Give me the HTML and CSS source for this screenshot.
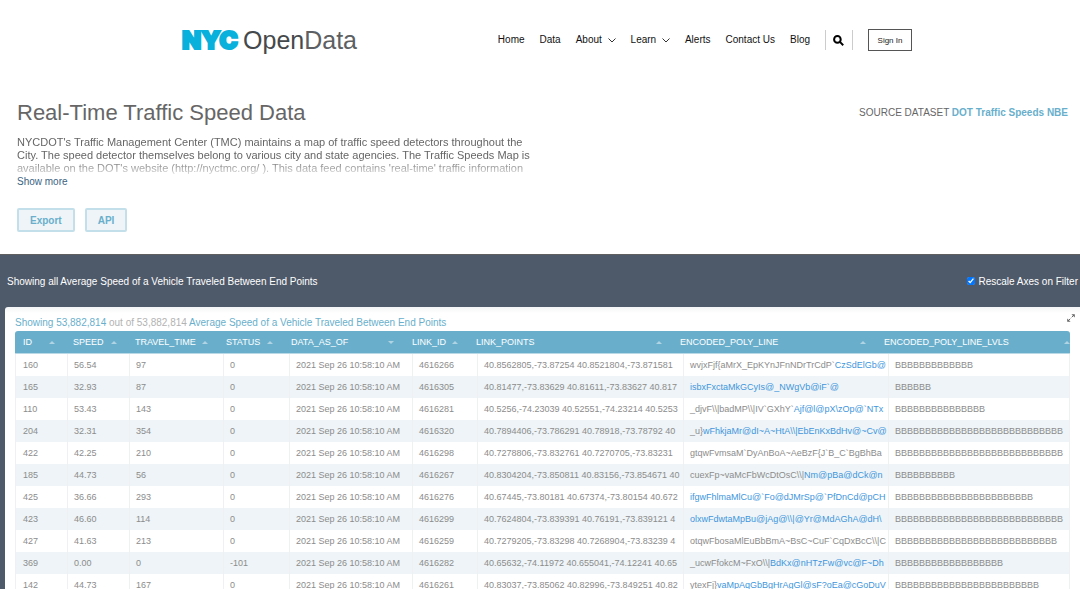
FILE: index.html
```html
<!DOCTYPE html>
<html lang="en">
<head>
<meta charset="utf-8">
<title>Real-Time Traffic Speed Data | NYC Open Data</title>
<link rel="stylesheet" href="styles.css">
</head>
<body>
<header class="site-header">
  <a class="logo" href="#"><span class="logo-nyc">NYC</span><span class="logo-open">Open</span><span class="logo-data">Data</span></a>
  <nav class="nav">
    <a href="#">Home</a>
    <a href="#">Data</a>
    <a href="#">About <svg class="chevron" viewBox="0 0 8 5"><path d="M.5.5 4 4 7.500.5"/></svg></a>
    <a href="#">Learn <svg class="chevron" viewBox="0 0 8 5"><path d="M.5.5 4 4 7.500.5"/></svg></a>
    <a href="#">Alerts</a>
    <a href="#">Contact Us</a>
    <a href="#">Blog</a>
  </nav>
  <button class="search" type="button" aria-label="Search"><svg viewBox="0 0 11 11"><circle cx="4.400" cy="4.400" r="3.300"/><path d="M6.900 6.900 10.200 10.200"/></svg></button>
  <button class="sign-in" type="button">Sign In</button>
</header>

<section class="intro">
  <div class="intro-main">
    <h1>Real-Time Traffic Speed Data</h1>
    <p class="description">NYCDOT's Traffic Management Center (TMC) maintains a map of traffic speed detectors throughout the City. The speed detector themselves belong to various city and state agencies. The Traffic Speeds Map is available on the DOT's website (http://nyctmc.org/ ). This data feed contains 'real-time' traffic information</p>
    <a class="show-more" href="#">Show more</a>
    <div class="actions"><button type="button">Export</button><button type="button">API</button></div>
  </div>
  <p class="source">SOURCE DATASET <a href="#">DOT Traffic Speeds NBE</a></p>
</section>

<main class="board">
  <div class="filter-bar">
    <span>Showing all Average Speed of a Vehicle Traveled Between End Points</span>
    <label class="rescale"><input type="checkbox" checked> Rescale Axes on Filter</label>
  </div>
  <section class="card">
    <div class="card-head">
      <p class="summary">Showing 53,882,814 <span>out of 53,882,814</span> Average Speed of a Vehicle Traveled Between End Points</p>
      <button class="expand" type="button" aria-label="Expand"><svg viewBox="0 0 8 8"><path class="tip" d="M4.400.2H7.800V3.600ZM.2 4.400V7.800H3.600Z"/><path class="stem" d="M6.500 1.500 4.700 3.300M3.300 4.700 1.500 6.500"/></svg></button>
    </div>
    <div class="table-wrap">
      <table class="head-table">
        <colgroup><col class="h1"><col class="h2"><col class="h3"><col class="h4"><col class="h5"><col class="h6"><col class="h7"><col class="h8"><col></colgroup>
        <thead><tr>
          <th><button type="button">ID</button></th>
          <th><button type="button">SPEED</button></th>
          <th><button type="button">TRAVEL_TIME</button></th>
          <th><button type="button">STATUS</button></th>
          <th class="desc"><button type="button">DATA_AS_OF</button></th>
          <th><button type="button">LINK_ID</button></th>
          <th><button type="button">LINK_POINTS</button></th>
          <th><button type="button">ENCODED_POLY_LINE</button></th>
          <th><button type="button">ENCODED_POLY_LINE_LVLS</button></th>
        </tr></thead>
      </table>
      <table class="body-table">
        <colgroup><col class="b1"><col class="b2"><col class="b3"><col class="b4"><col class="b5"><col class="b6"><col class="b7"><col class="b8"><col></colgroup>
        <tbody>
          <tr><td>160</td><td>56.54</td><td>97</td><td>0</td><td>2021 Sep 26 10:58:10 AM</td><td>4616266</td><td>40.8562805,-73.87254 40.8521804,-73.871581</td><td>wvjxFjf{aMrX_EpKYnJFnNDrTrCdP`<a href="#">CzSdElGb@</a></td><td>BBBBBBBBBBBBB</td></tr>
          <tr><td>165</td><td>32.93</td><td>87</td><td>0</td><td>2021 Sep 26 10:58:10 AM</td><td>4616305</td><td>40.81477,-73.83629 40.81611,-73.83627 40.817</td><td><a href="#">isbxFxctaMkGCyIs@_NWgVb@iF`@</a></td><td>BBBBBB</td></tr>
          <tr><td>110</td><td>53.43</td><td>143</td><td>0</td><td>2021 Sep 26 10:58:10 AM</td><td>4616281</td><td>40.5256,-74.23039 40.52551,-74.23214 40.5253</td><td>_djvF\\|badMP\\|IV`GXhY`<a href="#">Ajf@l@pX\zOp@`NTx</a></td><td>BBBBBBBBBBBBBBB</td></tr>
          <tr><td>204</td><td>32.31</td><td>354</td><td>0</td><td>2021 Sep 26 10:58:10 AM</td><td>4616320</td><td>40.7894406,-73.786291 40.78918,-73.78792 40</td><td>_u}<a href="#">wFhkjaMr@dI~A~HtA\\|EbEnKxBdHv@~Cv@</a></td><td>BBBBBBBBBBBBBBBBBBBBBBBBBBBB</td></tr>
          <tr><td>422</td><td>42.25</td><td>210</td><td>0</td><td>2021 Sep 26 10:58:10 AM</td><td>4616298</td><td>40.7278806,-73.832761 40.7270705,-73.83231</td><td>gtqwFvmsaM`DyAnBoA~AeBzF{J`B_C`BgBhBa</td><td>BBBBBBBBBBBBBBBBBBBBBBBBBBBB</td></tr>
          <tr><td>185</td><td>44.73</td><td>56</td><td>0</td><td>2021 Sep 26 10:58:10 AM</td><td>4616267</td><td>40.8304204,-73.850811 40.83156,-73.854671 40</td><td>cuexFp~vaMcFbWcDtOsC\\|<a href="#">Nm@pBa@dCk@n</a></td><td>BBBBBBBBBB</td></tr>
          <tr><td>425</td><td>36.66</td><td>293</td><td>0</td><td>2021 Sep 26 10:58:10 AM</td><td>4616276</td><td>40.67445,-73.80181 40.67374,-73.80154 40.672</td><td><a href="#">ifgwFhlmaMlCu@`Fo@dJMrSp@`PfDnCd@pCH</a></td><td>BBBBBBBBBBBBBBBBBBBBBBB</td></tr>
          <tr><td>423</td><td>46.60</td><td>114</td><td>0</td><td>2021 Sep 26 10:58:10 AM</td><td>4616299</td><td>40.7624804,-73.839391 40.76191,-73.839121 4</td><td><a href="#">olxwFdwtaMpBu@jAg@\\|@Yr@MdAGhA@dH\</a></td><td>BBBBBBBBBBBBBBBBBBBBBBBBBBBB</td></tr>
          <tr><td>427</td><td>41.63</td><td>213</td><td>0</td><td>2021 Sep 26 10:58:10 AM</td><td>4616259</td><td>40.7279205,-73.83298 40.7268904,-73.83239 4</td><td>otqwFbosaMlEuBbBmA~BsC~CuF`CqDxBcC\\|C</td><td>BBBBBBBBBBBBBBBBBBBBBBBBBBB</td></tr>
          <tr><td>369</td><td>0.00</td><td>0</td><td>-101</td><td>2021 Sep 26 10:58:10 AM</td><td>4616282</td><td>40.65632,-74.11972 40.655041,-74.12241 40.65</td><td>_ucwFfokcM~FxO\\|<a href="#">BdKx@nHTzFw@vc@F~Dh</a></td><td>BBBBBBBBBBBBBBBBBB</td></tr>
          <tr><td>142</td><td>44.73</td><td>167</td><td>0</td><td>2021 Sep 26 10:58:10 AM</td><td>4616261</td><td>40.83037,-73.85062 40.82996,-73.849251 40.82</td><td>ytexFj}<a href="#">vaMpAqGbBgHrAgGl@sF?oEa@cGoDuV</a></td><td>BBBBBBBBBBBBBBBBBBBBBBBB</td></tr>
        </tbody>
      </table>
    </div>
  </section>
</main>
</body>
</html>
```
FILE: styles.css
```css
* { box-sizing: border-box; }

body {
  margin: 0;
  height: 100vh;
  overflow: hidden;
  display: flex;
  flex-direction: column;
  background: #fff;
  color: #666;
  font-family: "Liberation Sans", Arial, sans-serif;
  font-size: 10px;
}

a { text-decoration: none; }
h1, p { margin: 0; }
button { font-family: inherit; cursor: pointer; }

.site-header {
  display: flex;
  align-items: center;
  flex-shrink: 0;
  height: 80px;
  padding: 0 168px 0 182px;
}

.logo {
  display: flex;
  align-items: center;
  margin-right: auto;
  font-size: 25px;
  line-height: 30px;
}
.logo-nyc {
  margin-right: 5px;
  color: #08b0dc;
  font-family: Inter, "Liberation Sans", sans-serif;
  font-weight: 900;
  -webkit-text-stroke: 2px #08b0dc;
}
.logo-open { color: #45494b; }
.logo-data { color: #5c6062; }

.nav { display: flex; gap: 15px; }
.nav a { color: #111; font-size: 10px; line-height: 20px; white-space: nowrap; }
.chevron { width: 8px; height: 5px; margin-left: 3px; fill: none; stroke: #333; }

.search {
  display: flex;
  align-items: center;
  justify-content: center;
  width: 28px;
  height: 20px;
  margin: 0 15px;
  padding: 0 2px 0 0;
  border: solid #ccc;
  border-width: 0 1px;
  background: none;
}
.search svg { width: 11px; height: 11px; fill: none; stroke: #000; stroke-width: 2; }

.sign-in {
  width: 44px;
  height: 22px;
  padding: 0;
  border: 1px solid #555;
  background: #fff;
  color: #222;
  font-size: 8px;
}

.intro {
  display: flex;
  justify-content: space-between;
  flex-shrink: 0;
  height: 174px;
  padding: 19px 12px 0 17px;
}
h1 { font-size: 22px; line-height: 28px; font-weight: 400; color: #666; }
.description {
  max-width: 528px;
  height: 39px;
  margin-top: 9px;
  overflow: hidden;
  font-size: 11px;
  line-height: 13px;
  color: #666;
  -webkit-mask-image: linear-gradient(#000 60%, rgba(0, 0, 0, 0.2));
  mask-image: linear-gradient(#000 60%, rgba(0, 0, 0, 0.2));
}
.show-more { display: block; color: #3c6382; line-height: 13px; }
.actions { display: flex; gap: 10px; margin-top: 20px; }
.actions button {
  height: 24px;
  padding: 0 11px;
  border: 2px solid #c3dfea;
  border-radius: 2px;
  background: #eef4f7;
  color: #69afcc;
  font-size: 10px;
  font-weight: 700;
}
.source { line-height: 28px; white-space: nowrap; color: #666; }
.source a { color: #69afcc; font-weight: 700; }

.board {
  display: flex;
  flex-direction: column;
  flex: 1;
  min-height: 0;
  padding-left: 5px;
  border-top: 1px solid #5f605f;
  background: #4e5969;
}
.filter-bar {
  display: flex;
  align-items: center;
  justify-content: space-between;
  height: 52px;
  padding: 0 2px;
  color: #fff;
}
.rescale { display: flex; align-items: center; gap: 4px; }
.rescale input { width: 8px; height: 8px; margin: 0; accent-color: #0075ff; }

.card {
  flex: 1;
  min-height: 0;
  overflow: hidden;
  padding: 0 10px;
  border-radius: 3px 0 0 0;
  background: linear-gradient(#f3f4f5, #fff 6px);
}
.card-head { display: flex; justify-content: space-between; height: 24px; }
.summary { padding-top: 10px; line-height: 12px; color: #69afcc; white-space: nowrap; }
.summary span { color: #b3b3b3; }
.expand { display: flex; align-self: flex-start; margin: 7px -5px 0 0; padding: 0; border: 0; background: none; }
.expand svg { width: 8px; height: 8px; }
.tip { fill: #666; }
.stem { stroke: #666; }

.table-wrap { overflow: hidden; border-radius: 3px 3px 0 0; }
table { table-layout: fixed; border-collapse: separate; border-spacing: 0; font-size: 9px; }
.head-table { width: calc(100% + 10px); background: #69afcc; }
.body-table { width: 100%; border-right: 1px solid #eef0f1; }
.h1 { width: 50px; }
.h2 { width: 62px; }
.h3 { width: 91px; }
.h4 { width: 65px; }
.h5 { width: 121px; }
.h6 { width: 64px; }
.h7, .h8 { width: 204px; }
.b1 { width: 52px; }
.b2 { width: 62px; }
.b3 { width: 94px; }
.b4 { width: 66px; }
.b5 { width: 123px; }
.b6 { width: 65px; }
.b7 { width: 206px; }
.b8 { width: 205px; }

th { height: 23px; padding: 0; border-bottom: 1px solid #b9d9e6; }
th button {
  display: flex;
  align-items: center;
  justify-content: space-between;
  width: 100%;
  padding: 0 10px 0 8px;
  border: 0;
  background: none;
  color: #fff;
  font-size: 9px;
}
th button::after {
  content: "";
  border: solid transparent;
  border-width: 0 3px 3px;
  border-bottom-color: #b0d4e3;
}
.desc button::after { border-width: 3px 3px 0; border-top-color: #b0d4e3; }

td {
  height: 22px;
  padding: 0 0 0 6px;
  overflow: hidden;
  border-left: 1px solid #eef0f1;
  color: #8c8c8c;
  white-space: nowrap;
}
td:first-child { padding-left: 7px; }
td a { color: #3e96dd; }
tr:nth-child(even) td { background: #eef4f7; }
```
